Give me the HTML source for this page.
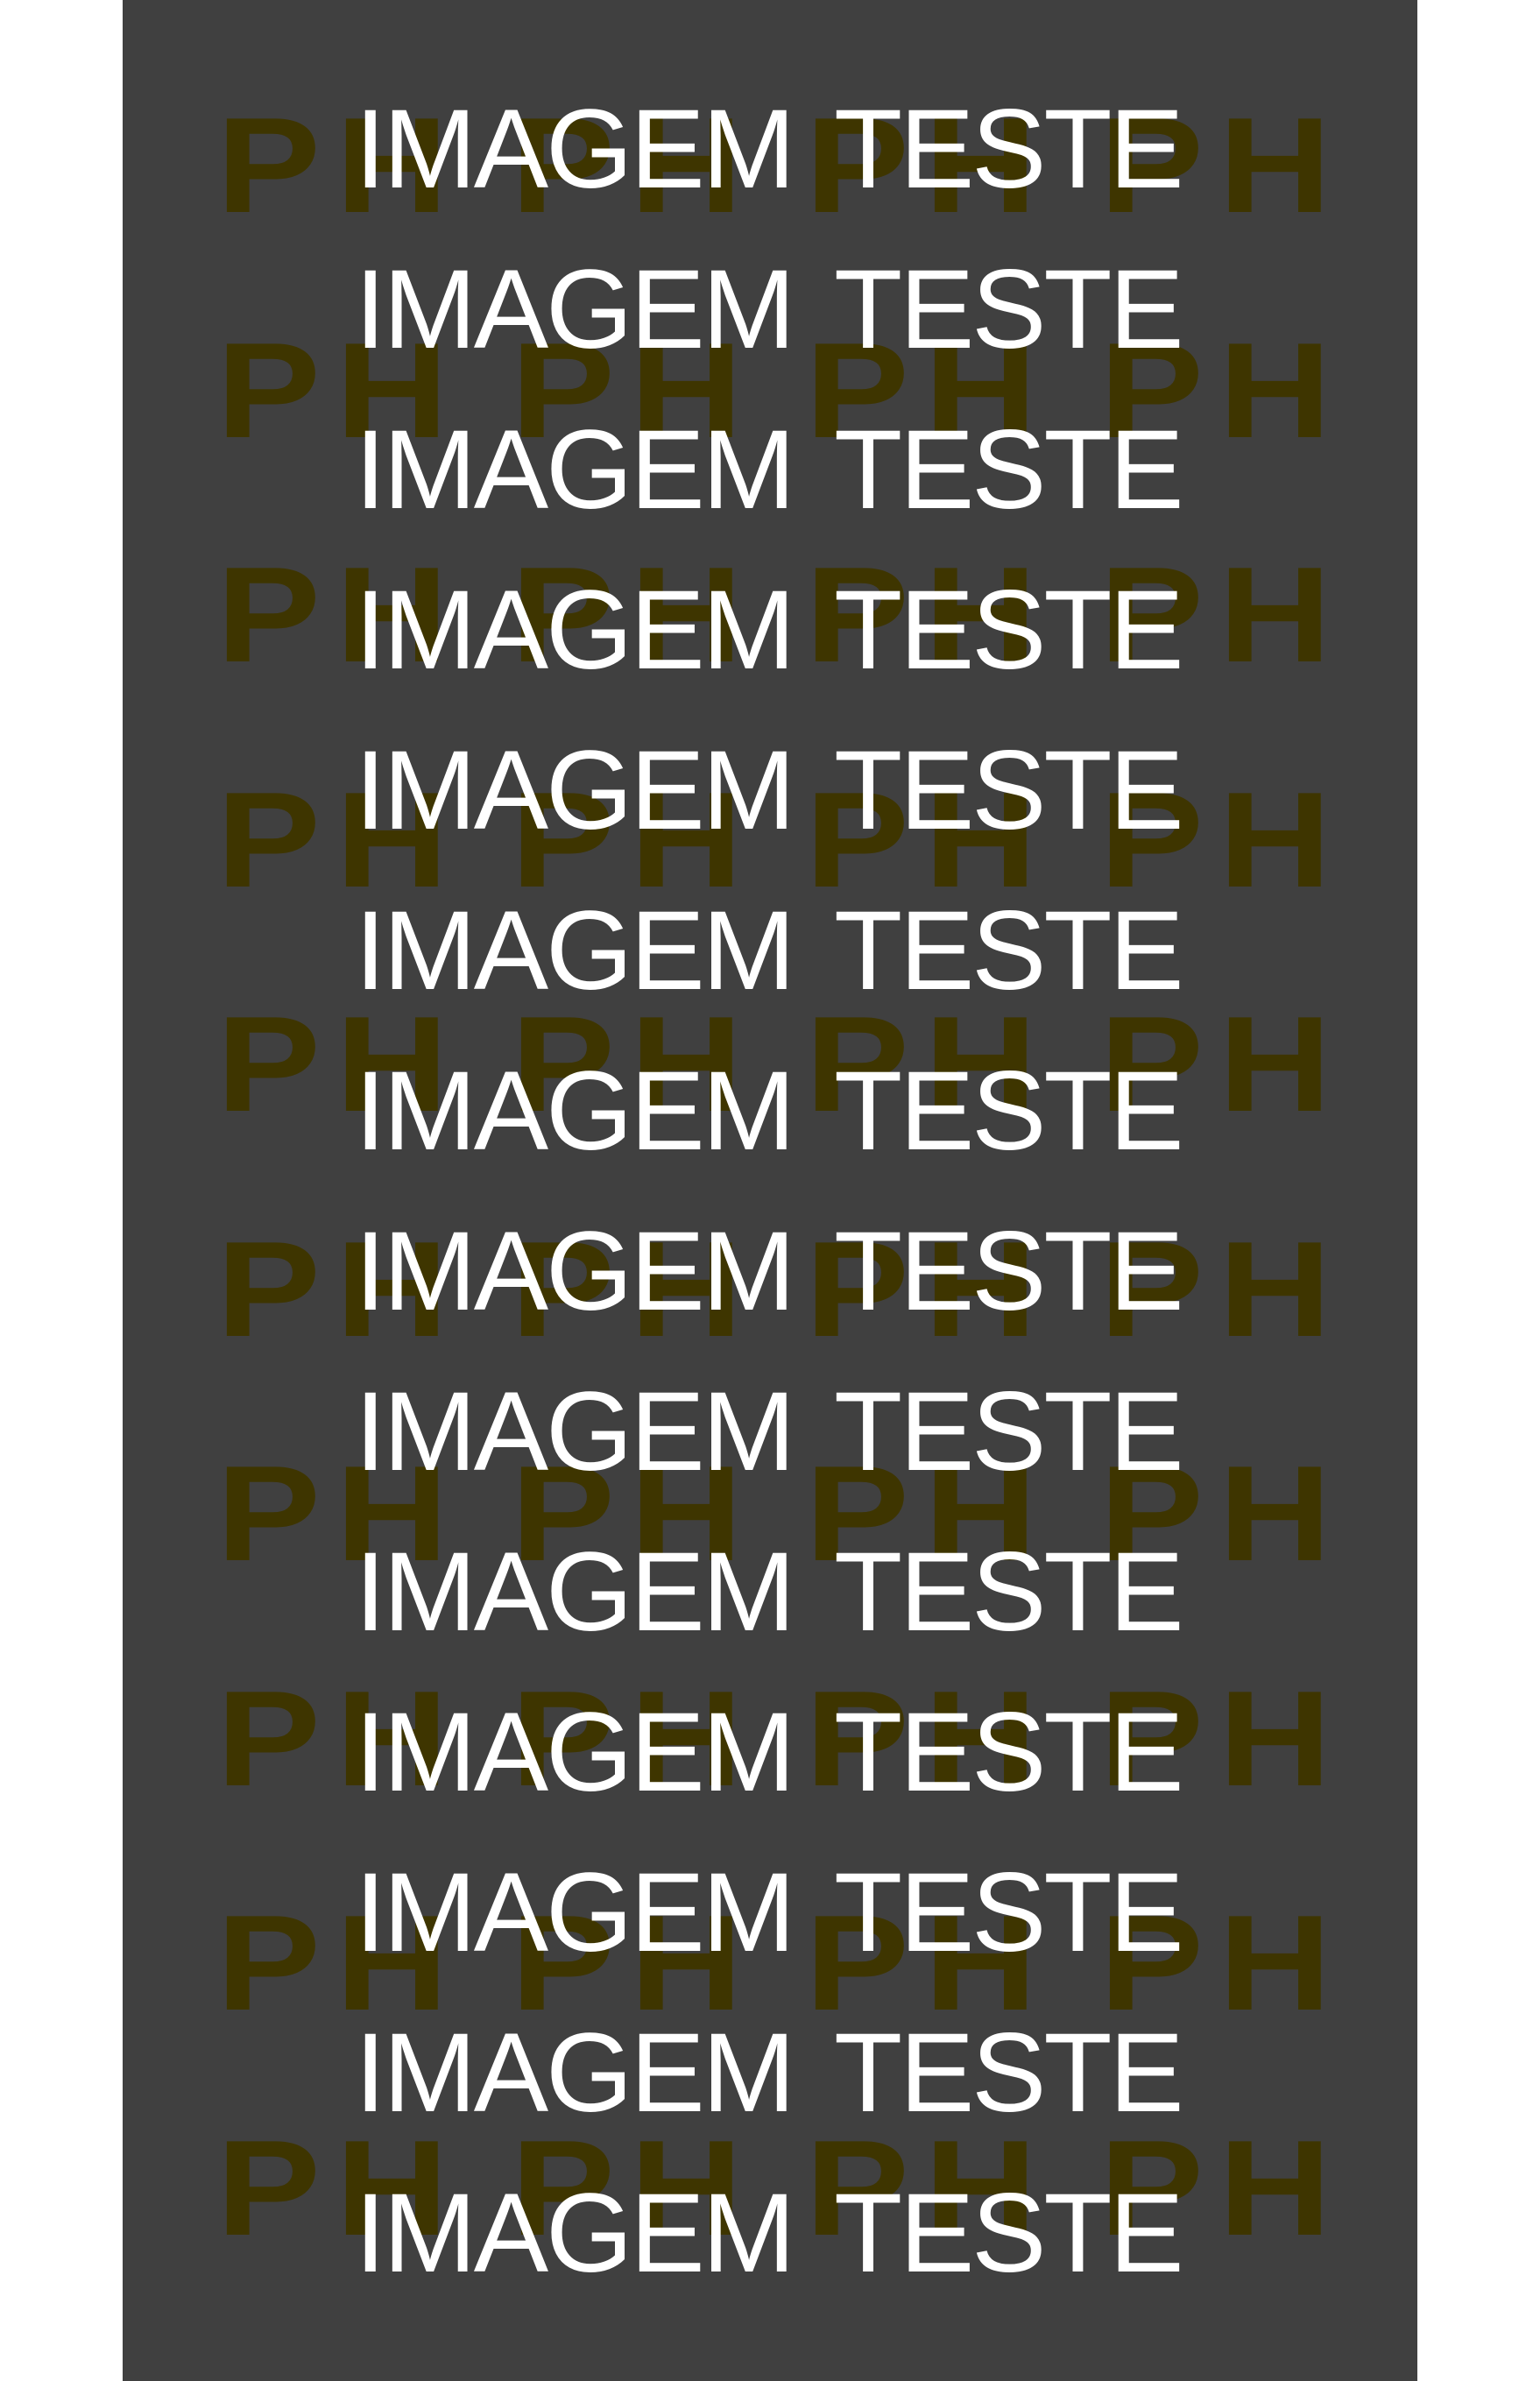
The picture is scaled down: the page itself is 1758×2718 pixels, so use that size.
<!DOCTYPE html>
<html><head><meta charset="utf-8"><style>
html,body{margin:0;padding:0;background:#fff;}
body{width:1758px;height:2718px;position:relative;overflow:hidden;}
#bg{position:absolute;left:140px;top:0;width:1478px;height:2718px;background:#404040;}
.p{position:absolute;font-family:"Liberation Sans",sans-serif;font-weight:bold;font-size:155px;line-height:155px;color:#3e3500;transform:scaleX(1.15);transform-origin:0 0;}
.t{position:absolute;left:405px;font-family:"Liberation Sans",sans-serif;font-size:128px;line-height:128px;color:#fff;letter-spacing:-3.2px;word-spacing:17px;white-space:nowrap;}
</style></head><body>
<div id="bg"></div>
<div id="w"></div>
<div id="tx"></div>
<script>
var w=document.getElementById('w'),h='';
for(var r=0;r<10;r++){var y=111+r*256.5;
 [247,583,919,1255].forEach(function(x){
  h+='<div class="p" style="left:'+x+'px;top:'+y+'px">P</div><div class="p" style="left:'+(x+136)+'px;top:'+y+'px">H</div>';});}
w.innerHTML=h;
var t='';
for(var i=0;i<14;i++){t+='<div class="t" style="top:'+(107+i*183)+'px">IMAGEM TESTE</div>';}
document.getElementById('tx').innerHTML=t;
</script>
</body></html>
